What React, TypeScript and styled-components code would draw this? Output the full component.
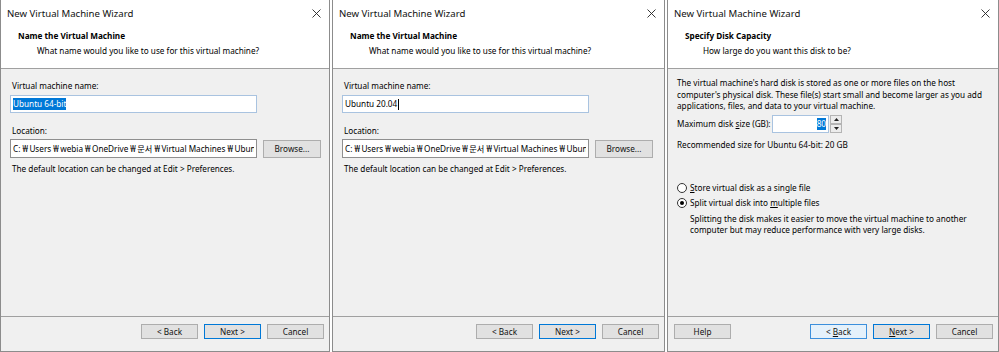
import React from "react";
import styled, { createGlobalStyle } from "styled-components";

const Global = createGlobalStyle`
  html, body { margin: 0; padding: 0; background: #ffffff; }
  body { font-family: "Noto Sans", "Noto Sans CJK KR", sans-serif; }
`;

const Screen = styled.div`
  display: flex;
  gap: 2px;
  width: 999px;
  height: 352px;
  overflow: hidden;
  background: #ffffff;
`;

const Dialog = styled.div<{ $w: number }>`
  width: ${(p) => p.$w}px;
  flex: none;
  height: 352px;
  box-sizing: border-box;
  border: 1px solid #8c8c8c;
  border-top: none;
  display: flex;
  flex-direction: column;
  background: #f0f0f0;
  color: #000;
  font-size: 8.2px;
  line-height: 12px;
`;

const TitleBar = styled.div`
  height: 27px;
  flex: none;
  background: #fff;
  display: flex;
  align-items: center;
  justify-content: space-between;
  padding: 0 8px 0 6px;
  font-size: 9.6px;
  color: #111;
`;

const Header = styled.div`
  height: 38px;
  flex: none;
  background: #fff;
  border-bottom: 1px solid #a0a0a0;
  padding: 3px 0 0 17px;
`;

const HeaderTitle = styled.div`
  font-weight: 700;
`;

const HeaderSub = styled.div<{ $indent: number }>`
  margin-top: 3px;
  padding-left: ${(p) => p.$indent}px;
`;

const Body = styled.div<{ $top: number }>`
  flex: 1;
  display: flex;
  flex-direction: column;
  align-items: flex-start;
  padding: ${(p) => p.$top}px 9px 0 9px;
`;

const Label = styled.div<{ $gap?: number }>`
  margin-left: 2px;
  margin-top: ${(p) => p.$gap ?? 0}px;
`;

const TextBox = styled.div<{ $w: number; $h: number; $focus?: boolean; $right?: boolean }>`
  width: ${(p) => p.$w}px;
  height: ${(p) => p.$h}px;
  box-sizing: border-box;
  border: 1px solid ${(p) => (p.$focus ? "#a9c3e0" : "#8f8f8f")};
  background: #fff;
  display: flex;
  align-items: center;
  justify-content: ${(p) => (p.$right ? "flex-end" : "flex-start")};
  padding: 0 2px;
  overflow: hidden;
  white-space: nowrap;
`;

const Clip = styled.span`
  display: block;
  flex: 1;
  min-width: 0;
  overflow: hidden;
  white-space: nowrap;
`;

const Selected = styled.span`
  background: #0078d7;
  color: #fff;
`;

const Caret = styled.span`
  display: inline-block;
  width: 1px;
  height: 11px;
  background: #000;
  margin-left: 1px;
`;

const Won = styled.span`
  margin: 0 1.5px 0 2px;
`;

const Row = styled.div<{ $gap?: number; $top?: number }>`
  display: flex;
  align-items: center;
  gap: ${(p) => p.$gap ?? 0}px;
  margin-top: ${(p) => p.$top ?? 0}px;
`;

const Hint = styled.div<{ $top: number; $left?: number }>`
  margin-top: ${(p) => p.$top}px;
  margin-left: ${(p) => p.$left ?? 2}px;
  white-space: nowrap;
`;

const Button = styled.div<{ $w?: number; $h?: number; $kind?: "default" | "hover" }>`
  width: ${(p) => p.$w ?? 57}px;
  height: ${(p) => p.$h ?? 15}px;
  box-sizing: border-box;
  flex: none;
  display: flex;
  align-items: center;
  justify-content: center;
  border: 1px solid
    ${(p) => (p.$kind === "default" ? "#0078d7" : p.$kind === "hover" ? "#3c8fdc" : "#adadad")};
  background: ${(p) => (p.$kind === "hover" ? "#e5f1fb" : "#e1e1e1")};
  color: #111;
`;

const Footer = styled.div`
  height: 27px;
  flex: none;
  border-top: 1px solid #a0a0a0;
  display: flex;
  align-items: flex-start;
  gap: 6px;
  padding: 7px 5px 0 6px;
`;

const Spacer = styled.div`
  margin-left: auto;
`;

const Para = styled.div<{ $top?: number; $left?: number }>`
  margin-top: ${(p) => p.$top ?? 0}px;
  margin-left: ${(p) => p.$left ?? 0}px;
  line-height: 11.5px;
  white-space: nowrap;
`;

const SizeLabel = styled.div`
  width: 95px;
`;

const Spin = styled.div`
  display: flex;
  flex-direction: column;
  margin-left: 1px;
`;

const SpinHalf = styled.div`
  width: 12px;
  height: 9px;
  box-sizing: border-box;
  border: 1px solid #b4b4b4;
  background: #ececec;
  display: flex;
  align-items: center;
  justify-content: center;
`;

const RadioRow = styled.div<{ $top?: number }>`
  display: flex;
  align-items: center;
  gap: 3px;
  height: 15px;
  margin-top: ${(p) => p.$top ?? 0}px;
`;

const RadioCircle = styled.div<{ $on?: boolean }>`
  width: 10px;
  height: 10px;
  box-sizing: border-box;
  border-radius: 50%;
  border: 1px solid #333;
  background: #fff;
  display: flex;
  align-items: center;
  justify-content: center;
  &::after {
    content: "";
    width: 4px;
    height: 4px;
    border-radius: 50%;
    background: ${(p) => (p.$on ? "#000" : "transparent")};
  }
`;

const CloseIcon = () => (
  <svg width="9" height="9" viewBox="0 0 9 9">
    <path d="M0.5 0.5 L8.5 8.5 M8.5 0.5 L0.5 8.5" stroke="#222" strokeWidth="0.9" fill="none" />
  </svg>
);

const Arrow = ({ up }: { up?: boolean }) => (
  <svg width="5" height="3" viewBox="0 0 5 3">
    <polygon points={up ? "0,3 5,3 2.5,0" : "0,0 5,0 2.5,3"} fill="#222" />
  </svg>
);

const Frame = ({
  w,
  title,
  sub,
  indent,
  cues,
  help,
  children,
}: {
  w: number;
  title: string;
  sub: string;
  indent: number;
  cues?: boolean;
  help?: boolean;
  children: React.ReactNode;
}) => (
  <Dialog $w={w}>
    <TitleBar>
      <span>New Virtual Machine Wizard</span>
      <CloseIcon />
    </TitleBar>
    <Header>
      <HeaderTitle>{title}</HeaderTitle>
      <HeaderSub $indent={indent}>{sub}</HeaderSub>
    </Header>
    {children}
    <Footer>
      {help && <Button>Help</Button>}
      <Spacer />
      <Button $kind={cues ? "hover" : undefined}>
        {cues ? (
          <span>
            &lt; <u>B</u>ack
          </span>
        ) : (
          "< Back"
        )}
      </Button>
      <Button $kind="default">
        {cues ? (
          <span>
            <u>N</u>ext &gt;
          </span>
        ) : (
          "Next >"
        )}
      </Button>
      <Button>Cancel</Button>
    </Footer>
  </Dialog>
);

const pathParts = ["C:", "Users", "webia", "OneDrive", "문서", "Virtual Machines", "Ubuntu 64-bit"];

const PathText = () => (
  <Clip>
    {pathParts.map((part, i) => (
      <React.Fragment key={i}>
        {i > 0 && <Won>₩</Won>}
        {part}
      </React.Fragment>
    ))}
  </Clip>
);

const NamePage = ({ w, name }: { w: number; name: React.ReactNode }) => (
  <Frame w={w} title="Name the Virtual Machine" sub="What name would you like to use for this virtual machine?" indent={19}>
    <Body $top={11}>
      <Label>Virtual machine name:</Label>
      <TextBox $w={247} $h={18} $focus style={{ marginTop: 3 }}>
        {name}
      </TextBox>
      <Label $gap={12}>Location:</Label>
      <Row $gap={6} $top={2}>
        <TextBox $w={247} $h={19}>
          <PathText />
        </TextBox>
        <Button $w={58} $h={18}>
          Browse...
        </Button>
      </Row>
      <Hint $top={5}>The default location can be changed at Edit &gt; Preferences.</Hint>
    </Body>
  </Frame>
);

export default function App() {
  return (
    <>
      <Global />
      <Screen>
        <NamePage w={330} name={<Selected>Ubuntu 64-bit</Selected>} />
        <NamePage
          w={333}
          name={
            <>
              Ubuntu 20.04
              <Caret />
            </>
          }
        />
        <Frame
          w={332}
          title="Specify Disk Capacity"
          sub="How large do you want this disk to be?"
          indent={18}
          cues
          help
        >
          <Body $top={8}>
            <Para>
              The virtual machine's hard disk is stored as one or more files on the host
              <br />
              computer's physical disk. These file(s) start small and become larger as you add
              <br />
              applications, files, and data to your virtual machine.
            </Para>
            <Row $top={3}>
              <SizeLabel>
                Maximum disk <u>s</u>ize (GB):
              </SizeLabel>
              <TextBox $w={57} $h={18} $focus $right>
                <Selected>80</Selected>
              </TextBox>
              <Spin>
                <SpinHalf>
                  <Arrow up />
                </SpinHalf>
                <SpinHalf>
                  <Arrow />
                </SpinHalf>
              </Spin>
            </Row>
            <Hint $top={6} $left={0}>
              Recommended size for Ubuntu 64-bit: 20 GB
            </Hint>
            <RadioRow $top={30}>
              <RadioCircle />
              <span>
                <u>S</u>tore virtual disk as a single file
              </span>
            </RadioRow>
            <RadioRow>
              <RadioCircle $on />
              <span>
                Split virtual disk into <u>m</u>ultiple files
              </span>
            </RadioRow>
            <Para $top={2} $left={13}>
              Splitting the disk makes it easier to move the virtual machine to another
              <br />
              computer but may reduce performance with very large disks.
            </Para>
          </Body>
        </Frame>
      </Screen>
    </>
  );
}
